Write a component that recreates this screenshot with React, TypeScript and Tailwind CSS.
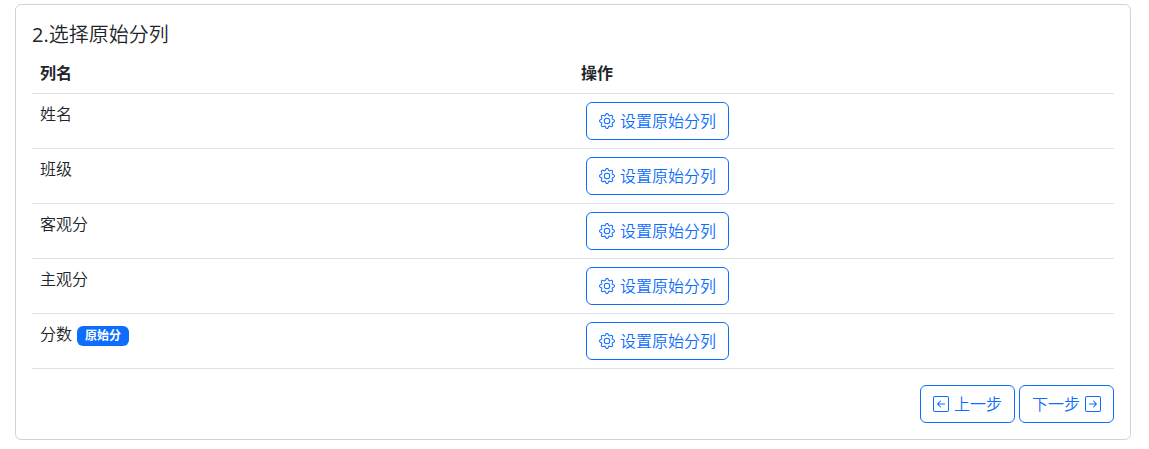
import React from "react";
import { BsArrowLeftSquare, BsArrowRightSquare, BsGear } from "react-icons/bs";

type ColumnType = {
  name: string;
  isRawScore?: boolean;
};

type OutlineButtonProps = {
  children: React.ReactNode;
  onClick?: () => void;
};

const columns: ColumnType[] = [
  { name: "姓名" },
  { name: "班级" },
  { name: "客观分" },
  { name: "主观分" },
  { name: "分数", isRawScore: true },
];

const OutlineButton: React.FC<OutlineButtonProps> = ({ children, onClick }) => (
  <button
    type="button"
    onClick={onClick}
    className="inline-flex items-center gap-[5px] rounded-md border border-[#0d6efd] px-3 py-1.5 text-base leading-6 text-[#0d6efd] cursor-pointer hover:bg-[#0d6efd] hover:text-white"
  >
    {children}
  </button>
);

export const App: React.FC = () => {
  const [selected, setSelected] = React.useState(
    columns.findIndex((column) => column.isRawScore)
  );

  return (
    <main className="pt-1 pl-[15px] pr-[18px] font-[350] text-[#212529] font-['Open_Sans','Noto_Sans_CJK_SC',sans-serif]">
      <section className="rounded-md border border-[#d2d3d4] bg-white p-4">
        <h5 className="mb-1 text-xl leading-7">
          <span className="font-normal">2.</span>选择原始分列
        </h5>

        <table className="mb-4 w-full table-fixed border-collapse text-left text-base leading-6">
          <thead>
            <tr className="border-b border-[#dee2e6]">
              <th className="p-2 font-bold">列名</th>
              <th className="p-2 font-bold">操作</th>
            </tr>
          </thead>
          <tbody>
            {columns.map((column, index) => (
              <tr key={column.name} className="border-b border-[#dee2e6]">
                <td className="p-2 align-top">
                  {column.name}
                  {index === selected && (
                    <span className="ml-[5px] inline-block rounded-md bg-[#0d6efd] px-2 py-1 align-baseline text-xs leading-3 font-bold text-white">
                      原始分
                    </span>
                  )}
                </td>
                <td className="p-2 align-top">
                  <div className="flex pl-[5px]">
                    <OutlineButton onClick={() => setSelected(index)}>
                      <BsGear />
                      设置原始分列
                    </OutlineButton>
                  </div>
                </td>
              </tr>
            ))}
          </tbody>
        </table>

        <div className="flex justify-end gap-1">
          <OutlineButton>
            <BsArrowLeftSquare />
            上一步
          </OutlineButton>
          <OutlineButton>
            下一步
            <BsArrowRightSquare />
          </OutlineButton>
        </div>
      </section>
    </main>
  );
};

export default App;
